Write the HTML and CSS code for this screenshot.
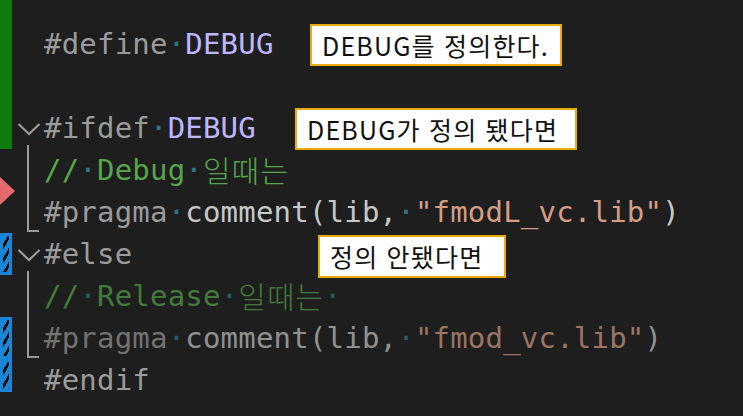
FILE: index.html
```html
<!DOCTYPE html>
<html lang="ko">
<head>
<meta charset="utf-8">
<link rel="stylesheet" href="styles.css">
</head>
<body>
<div class="editor">
  <div class="line partial"><div class="bar added"></div><div class="fold"></div><div class="code"></div></div>
  <div class="line">
    <div class="bar added"></div><div class="fold"></div>
    <div class="code"><span class="pp">#define</span><span class="ws">·</span><span class="macro">DEBUG</span></div>
    <div class="note note-define">DEBUG를 정의한다.</div>
  </div>
  <div class="line"><div class="bar added"></div><div class="fold"></div><div class="code"></div></div>
  <div class="line">
    <div class="bar added"></div>
    <div class="fold"><svg class="chev" width="24" height="14" viewBox="0 0 24 14"><polyline points="1.5,2 12,12 22.5,2" fill="none" stroke="#a0a0a0" stroke-width="2"/></svg></div>
    <div class="code"><span class="pp">#ifdef</span><span class="ws">·</span><span class="macro">DEBUG</span></div>
    <div class="note note-ifdef">DEBUG가 정의 됐다면</div>
  </div>
  <div class="line">
    <div class="bar"></div><div class="fold"><div class="guide"></div></div>
    <div class="code"><span class="cm">//</span><span class="ws">·</span><span class="cm">Debug</span><span class="ws">·</span><span class="cm ko">일때는</span></div>
  </div>
  <div class="line">
    <div class="bar deleted"></div><div class="fold"><div class="guide end"></div></div>
    <div class="code"><span class="pp">#pragma</span><span class="ws">·</span><span class="id">comment(lib,</span><span class="ws">·</span><span class="str">"fmodL_vc.lib"</span><span class="id">)</span></div>
  </div>
  <div class="line">
    <div class="bar changed"></div>
    <div class="fold"><svg class="chev" width="24" height="14" viewBox="0 0 24 14"><polyline points="1.5,2 12,12 22.5,2" fill="none" stroke="#a0a0a0" stroke-width="2"/></svg></div>
    <div class="code"><span class="pp">#else</span></div>
    <div class="note note-else">정의 안됐다면</div>
  </div>
  <div class="line inactive">
    <div class="bar"></div><div class="fold"><div class="guide"></div></div>
    <div class="code"><span class="cm">//</span><span class="ws">·</span><span class="cm">Release</span><span class="ws">·</span><span class="cm ko">일때는</span><span class="ws">·</span></div>
  </div>
  <div class="line inactive">
    <div class="bar changed"></div><div class="fold"><div class="guide end"></div></div>
    <div class="code"><span class="pp">#pragma</span><span class="ws">·</span><span class="id">comment(lib,</span><span class="ws">·</span><span class="str">"fmod_vc.lib"</span><span class="id">)</span></div>
  </div>
  <div class="line">
    <div class="bar changed short"></div><div class="fold"></div>
    <div class="code"><span class="pp">#endif</span></div>
  </div>
</div>
</body>
</html>
```
FILE: styles.css
```css
html, body {
  margin: 0;
  padding: 0;
  background: #1e1e1e;
  width: 743px;
  height: 416px;
  overflow: hidden;
}
.editor {
  display: flex;
  flex-direction: column;
}
.line {
  position: relative;
  display: grid;
  grid-template-columns: 12px 32px 1fr;
  height: 42px;
}
.line.partial {
  height: 23px;
}
.bar {
  position: relative;
}
.bar.added {
  background: #107c10;
}
.bar.changed {
  background: #1a86d8;
}
.bar.changed::before {
  content: "";
  position: absolute;
  left: 3px;
  right: 3px;
  top: 3px;
  bottom: 3px;
  background: repeating-linear-gradient(120deg, #1a86d8 0 4px, #111 4px 7px);
}
.bar.short {
  height: 33px;
}
.bar.deleted::before {
  content: "";
  position: absolute;
  left: 0;
  top: -14px;
  width: 0;
  height: 0;
  border-top: 14px solid transparent;
  border-bottom: 14px solid transparent;
  border-left: 15px solid #e46a6c;
}
.fold {
  position: relative;
}
.chev {
  position: absolute;
  left: 5px;
  top: 15px;
}
.guide {
  position: absolute;
  left: 15px;
  top: -4px;
  bottom: 0;
  width: 12px;
  border-left: 2px solid #9a9a9a;
  box-sizing: border-box;
}
.guide.end {
  top: 0;
  bottom: 1px;
  border-bottom: 2px solid #9a9a9a;
}
.code {
  font-family: "DejaVu Sans Mono", "Noto Sans CJK KR", monospace;
  font-size: 29px;
  line-height: 42px;
  letter-spacing: 0.2px;
  white-space: pre;
  color: #dcdcdc;
}
.ko {
  font-family: "Noto Sans CJK KR", sans-serif;
  font-size: 30px;
  font-weight: 300;
  letter-spacing: 1px;
  vertical-align: top;
  line-height: 40px;
}
.pp { color: #9b9b9b; }
.macro { color: #beb7ff; }
.cm { color: #57a64a; }
.id { color: #c8c8c8; }
.str { color: #d69d85; }
.ws { color: #2b7a86; }
.inactive .code { opacity: 0.68; }
.note {
  position: absolute;
  top: 1px;
  height: 42px;
  box-sizing: border-box;
  border: 2px solid #e8ad0a;
  background: #ffffff;
  color: #111;
  font-family: "Noto Sans CJK KR", sans-serif;
  font-size: 25px;
  letter-spacing: 1.2px;
  line-height: 38px;
  padding: 0 10px;
  white-space: nowrap;
}
.note-define { left: 310px; width: 252px; }
.note-ifdef { left: 295px; width: 282px; }
.note-else { left: 318px; width: 188px; top: 2px; height: 43px; line-height: 39px; }
```
